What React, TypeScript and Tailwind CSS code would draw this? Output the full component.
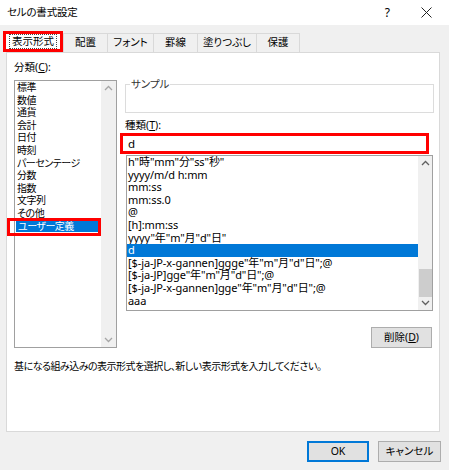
const jp = "[font-family:'Noto_Sans','Noto_Sans_CJK_JP',sans-serif] [font-feature-settings:'palt']";

const categories = [
  "標準",
  "数値",
  "通貨",
  "会計",
  "日付",
  "時刻",
  "パーセンテージ",
  "分数",
  "指数",
  "文字列",
  "その他",
  "ユーザー定義",
];

const formats = [
  'h"時"mm"分"ss"秒"',
  "yyyy/m/d h:mm",
  "mm:ss",
  "mm:ss.0",
  "@",
  "[h]:mm:ss",
  'yyyy"年"m"月"d"日"',
  "d",
  '[$-ja-JP-x-gannen]ggge"年"m"月"d"日";@',
  '[$-ja-JP]gge"年"m"月"d"日";@',
  '[$-ja-JP-x-gannen]gge"年"m"月"d"日";@',
  "aaa",
];

const tabs = [
  { label: "配置", w: "w-[45px]" },
  { label: "フォント", w: "w-[47px]" },
  { label: "罫線", w: "w-[45px]" },
  { label: "塗りつぶし", w: "w-[60px]" },
  { label: "保護", w: "w-[44px]" },
];

function Chevron({ up, dark }: { up?: boolean; dark?: boolean }) {
  return (
    <svg width="9" height="6" viewBox="0 0 9 6">
      <polyline
        points={up ? "1,5 4.5,1.5 8,5" : "1,1 4.5,4.5 8,1"}
        fill="none"
        stroke={dark ? "#606060" : "#a6a6a6"}
        strokeWidth="1.3"
      />
    </svg>
  );
}

export default function App() {
  return (
    <div className={`w-[449px] h-[470px] bg-[#f0f0f0] flex flex-col text-black ${jp}`}>
      {/* title bar */}
      <div className="h-[25px] bg-white flex items-center pl-[7px] text-[10.5px]">
        <span className="tracking-[-0.2px]">セルの書式設定</span>
        <span className="ml-auto mr-[31px] text-[12px]">?</span>
        <svg width="11" height="11" viewBox="0 0 11 11" className="mr-[17px]">
          <path d="M0.5 0.5 L10.5 10.5 M10.5 0.5 L0.5 10.5" stroke="#222" strokeWidth="1" />
        </svg>
      </div>

      {/* tabs */}
      <div className="flex items-end pl-[3px] mt-[6px] h-[21px] text-[10.5px]">
        <div className="w-[60px] h-[21px] bg-white border-[3px] border-[#ff0000] flex items-center justify-center">
          <span className="border border-dotted border-[#444] px-[2px] leading-[13px]">表示形式</span>
        </div>
        {tabs.map((t, i) => (
          <div
            key={t.label}
            className={`${t.w} h-[19px] border border-b-0 border-[#d9d9d9] flex items-center justify-center ${i > 0 ? "-ml-px" : ""}`}
          >
            {t.label}
          </div>
        ))}
      </div>

      {/* panel */}
      <div className="ml-[6px] w-[434px] h-[380px] bg-white border border-[#d9d9d9] flex flex-col pl-[7px] text-[10.5px]">
        <div className="flex gap-[8px]">
          {/* category list */}
          <div className="w-[103px] pt-[6px] flex flex-col">
            <div className="h-[16px] leading-[16px]">
              分類(<span className="underline">C</span>):
            </div>
            <div className="mt-[5px] h-[268px] border border-[#a0a0a0] flex">
              <div className="flex-1 flex flex-col text-[10px] tracking-[-0.5px]">
                {categories.map((c) => {
                  const sel = c === "ユーザー定義";
                  return (
                    <div
                      key={c}
                      className={`relative h-[12.6px] leading-[12.6px] pl-[2px] ${sel ? "bg-[#0078d7] text-white mx-px" : ""}`}
                    >
                      {c}
                      {sel && (
                        <div className="absolute -left-[9px] -top-[2px] w-[94px] h-[18px] border-[3px] border-[#ff0000]" />
                      )}
                    </div>
                  );
                })}
              </div>
              <div className="w-[15px] bg-[#f0f0f0] flex flex-col items-center justify-between py-[4px]">
                <Chevron up />
                <Chevron />
              </div>
            </div>
          </div>

          {/* format column */}
          <div className="w-[309px] pt-[24px] flex flex-col">
            <fieldset className="h-[36px] border border-[#dcdcdc] px-[4px]">
              <legend className="leading-[14px] px-[1px] text-[#333]">サンプル</legend>
            </fieldset>
            <div className="mt-[5px] h-[15px] leading-[15px]">
              種類(<span className="underline">T</span>):
            </div>
            <div className="-ml-[5px] w-[309px] h-[21px] border-[3px] border-[#ff0000] bg-white flex items-center pl-[5px] text-[11.5px]">
              d
            </div>
            <div className="mt-[1px] ml-[1px] w-[307px] h-[156px] border border-[#a0a0a0] flex">
              <div className="flex-1 flex flex-col text-[11px] tracking-[-0.1px]">
                {formats.map((f) => {
                  const sel = f === "d";
                  return (
                    <div
                      key={f}
                      className={`h-[12.6px] leading-[12.6px] pl-[1px] whitespace-nowrap ${sel ? "bg-[#0078d7] text-white" : ""}`}
                    >
                      {f}
                    </div>
                  );
                })}
              </div>
              <div className="w-[14px] bg-[#f0f0f0] flex flex-col items-center pt-[4px] pb-[4px]">
                <Chevron up dark />
                <div className="mt-auto mb-[3px] w-[13px] h-[28px] bg-[#cdcdcd]" />
                <Chevron dark />
              </div>
            </div>
            <div className="mt-[16px] ml-auto mr-[2px] w-[61px] h-[21px] bg-[#e1e1e1] border border-[#adadad] flex items-center justify-center">
              削除(<span className="underline">D</span>)
            </div>
          </div>
        </div>
        <div className="mt-[10px] h-[16px] leading-[16px] text-[10px] tracking-[-0.5px]">
          基になる組み込みの表示形式を選択し、新しい表示形式を入力してください。
        </div>
      </div>

      {/* buttons */}
      <div className="mt-[9px] flex justify-end gap-[9px] pr-[8px] text-[10.5px]">
        <div className="w-[62px] h-[21px] bg-[#e1e1e1] border-2 border-[#0078d7] flex items-center justify-center">
          OK
        </div>
        <div className="w-[63px] h-[21px] bg-[#e1e1e1] border border-[#adadad] flex items-center justify-center">
          キャンセル
        </div>
      </div>
    </div>
  );
}
